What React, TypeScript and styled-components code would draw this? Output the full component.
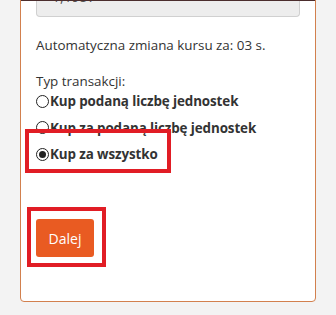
import styled, { createGlobalStyle } from "styled-components";

const GlobalStyle = createGlobalStyle`
  html, body {
    margin: 0;
    padding: 0;
    background: #f3f3f3;
    overflow: hidden;
  }
  body {
    font-family: "Open Sans", "Noto Sans", sans-serif;
    color: #333;
  }
`;

const Page = styled.div`
  padding: 0 20px;
  width: 296px;
`;

const Card = styled.div`
  margin-top: -30px;
  background: #fff;
  border: 1px solid #d2804e;
  border-radius: 0 0 4px 4px;
  padding: 0 15px 44px 15px;
`;

const TopLine = styled.div`
  height: 1px;
  margin: 29px -15px 0 -15px;
  background: #4b2d2d;
`;

const RateInput = styled.div`
  box-sizing: border-box;
  height: 16px;
  background: #ededed;
  border: 1px solid #d0d0d0;
  border-top: none;
  border-radius: 0 0 4px 4px;
  position: relative;
  overflow: hidden;
  .value {
    position: absolute;
    left: 15px;
    top: -14px;
    font-size: 14px;
    line-height: 20px;
    color: #555;
  }
`;

const Info = styled.p`
  margin: 18px 0 0 0;
  font-size: 13.4px;
  line-height: 20px;
`;

const Label = styled.p`
  margin: 16px 0 0 0;
  font-size: 13.4px;
  line-height: 20px;
`;

const Options = styled.div`
  display: flex;
  flex-direction: column;
  align-items: flex-start;
  gap: 6.5px;
`;

const Option = styled.label`
  display: flex;
  align-items: center;
  font-size: 13.4px;
  line-height: 20px;
  font-weight: 700;
  letter-spacing: -0.1px;
`;

const Radio = styled.span<{ $checked?: boolean }>`
  box-sizing: border-box;
  width: 13px;
  height: 13px;
  border: 1px solid #222;
  border-radius: 50%;
  margin-right: 1px;
  display: inline-flex;
  align-items: center;
  justify-content: center;
  &::after {
    content: "";
    width: 7px;
    height: 7px;
    border-radius: 50%;
    background: ${p => (p.$checked ? "#222" : "transparent")};
  }
`;

const Highlight = styled.div<{ $t: number; $r: number; $b: number; $l: number }>`
  position: relative;
  display: flex;
  &::after {
    content: "";
    position: absolute;
    top: ${p => -p.$t}px;
    right: ${p => -p.$r}px;
    bottom: ${p => -p.$b}px;
    left: ${p => -p.$l}px;
    border: 4px solid #e11d25;
    pointer-events: none;
  }
`;

const ButtonRow = styled.div`
  display: flex;
  margin-top: 55px;
`;

const Button = styled.button`
  display: block;
  width: 58px;
  height: 38px;
  border: none;
  border-radius: 3px;
  background: #e95b22;
  color: #fff;
  font-family: "Open Sans", "Noto Sans", sans-serif;
  font-size: 14px;
  padding: 0;
  cursor: pointer;
`;

const App = () => {
  return (
    <Page>
      <GlobalStyle />
      <Card>
        <TopLine />
        <RateInput>
          <span className="value">1,1957</span>
        </RateInput>
        <Info>Automatyczna zmiana kursu za: 03 s.</Info>
        <Label>Typ transakcji:</Label>
        <Options>
          <Option>
            <Radio />Kup podaną liczbę jednostek
          </Option>
          <Option>
            <Radio />Kup za podaną liczbę jednostek
          </Option>
          <Highlight $t={15} $r={13} $b={9} $l={11}>
            <Option>
              <Radio $checked />Kup za wszystko
            </Option>
          </Highlight>
        </Options>
        <ButtonRow>
          <Highlight $t={12} $r={12} $b={10} $l={9}>
            <Button type="button">Dalej</Button>
          </Highlight>
        </ButtonRow>
      </Card>
    </Page>
  );
};

export default App;
